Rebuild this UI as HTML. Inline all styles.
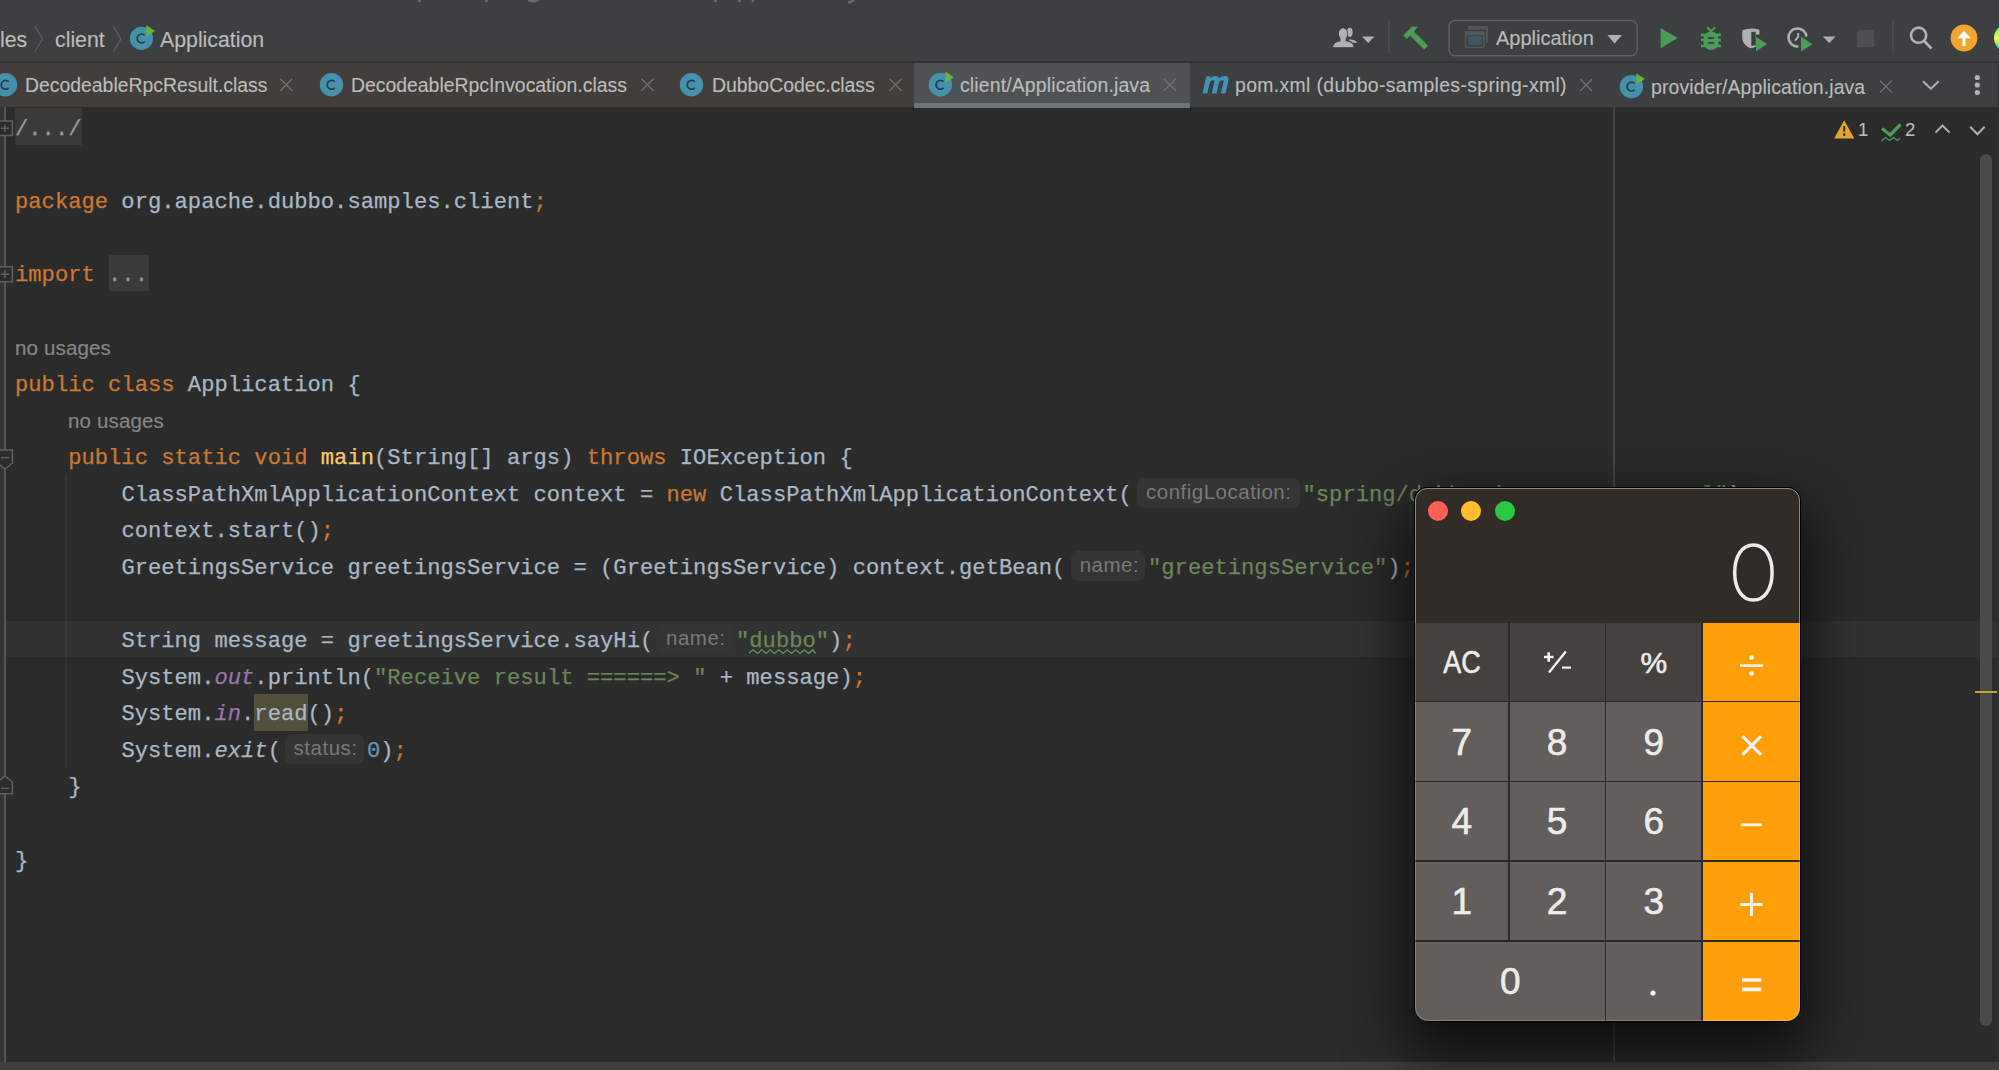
<!DOCTYPE html>
<html><head><meta charset="utf-8">
<style>
*{margin:0;padding:0;box-sizing:border-box}
html,body{width:1999px;height:1070px;overflow:hidden;background:#2b2b2b;position:relative}
body{font-family:"Liberation Sans",sans-serif}
.a{position:absolute}
.cl{position:absolute;-webkit-text-stroke:0.25px currentColor;font-family:"Liberation Mono",monospace;font-size:22.17px;line-height:36.6px;white-space:pre;height:36.6px}
.inl{position:absolute;height:30px;background:#343434;border-radius:7px}
.inl span{position:absolute;top:2px;font-size:20.5px;line-height:24px;letter-spacing:0.5px;color:#7a7a7a;white-space:pre}
.ui{position:absolute;white-space:pre;color:#bbbbbb;-webkit-text-stroke:0.15px currentColor}
</style></head><body>

<div class="a" style="left:0;top:0;width:1999px;height:62px;background:#3d3f41"></div>
<div class="a" style="left:0;top:61px;width:1999px;height:2px;background:#323334"></div>
<div class="ui" style="left:0;top:27px;font-size:21.3px;line-height:26px">les</div>
<div class="ui" style="left:55px;top:27px;font-size:21.3px;line-height:26px">client</div>
<div class="ui" style="left:160px;top:27px;font-size:21.3px;line-height:26px">Application</div>
<div class="a" style="left:0;top:63px;width:1999px;height:44px;background:#3d3f41"></div>
<div class="a" style="left:0;top:63px;width:914px;height:44px;background:#413e3c"></div>
<div class="a" style="left:914px;top:63px;width:276px;height:44px;background:#4e5254"></div>
<div class="a" style="left:914px;top:102.6px;width:276px;height:5px;background:#6f737a"></div>
<div class="ui" style="left:25px;top:73px;font-size:19.4px;line-height:24px;letter-spacing:0px">DecodeableRpcResult.class</div>
<div class="ui" style="left:351px;top:73px;font-size:19.4px;line-height:24px;letter-spacing:0px">DecodeableRpcInvocation.class</div>
<div class="ui" style="left:712px;top:73px;font-size:19.4px;line-height:24px;letter-spacing:0px">DubboCodec.class</div>
<div class="ui" style="left:960px;top:73px;font-size:19.4px;line-height:24px;letter-spacing:0.16px">client/Application.java</div>
<div class="ui" style="left:1235px;top:73px;font-size:19.4px;line-height:24px;letter-spacing:0.35px">pom.xml (dubbo-samples-spring-xml)</div>
<div class="ui" style="left:1651px;top:74.8px;font-size:19.4px;line-height:24px;letter-spacing:0.12px">provider/Application.java</div>
<div class="ui" style="left:1496px;top:26px;font-size:20px;line-height:24px">Application</div>
<div class="ui" style="left:1858px;top:118px;font-size:18.5px;line-height:24px">1</div>
<div class="ui" style="left:1905px;top:118px;font-size:18.5px;line-height:24px">2</div>
<div class="a" style="left:0;top:107px;width:4px;height:955px;background:#313335"></div>
<div class="a" style="left:4px;top:107px;width:2px;height:955px;background:#555555"></div>
<div class="a" style="left:1612.5px;top:107px;width:2px;height:955px;background:#444444"></div>
<div class="a" style="left:6px;top:620.8px;width:1993px;height:36.6px;background:#323232"></div>
<div class="a" style="left:15px;top:108.4px;width:67px;height:36.6px;background:#3a3a3a"></div>
<div class="cl" style="left:15.00px;top:111.60px"><span style="color:#9a9a9a;">/.../</span></div>
<div class="cl" style="left:15.00px;top:184.80px"><span style="color:#cc7832;">package</span><span style="color:#a9b7c6;"> org.apache.dubbo.samples.client</span><span style="color:#cc7832;">;</span></div>
<div class="a" style="left:109.1px;top:254.8px;width:40px;height:36.6px;background:#3a3a3a"></div>
<div class="cl" style="left:15.00px;top:258.00px"><span style="color:#cc7832;">import</span><span style="color:#a9b7c6;"> </span><span style="color:#9a9a9a;">...</span></div>
<div class="ui" style="left:15px;top:335.5px;font-size:20.5px;line-height:24px;color:#878787;letter-spacing:0.15px">no usages</div>
<div class="cl" style="left:15.00px;top:367.80px"><span style="color:#cc7832;">public class</span><span style="color:#a9b7c6;"> Application {</span></div>
<div class="ui" style="left:68px;top:408.7px;font-size:20.5px;line-height:24px;color:#878787;letter-spacing:0.15px">no usages</div>
<div class="cl" style="left:68.20px;top:441.00px"><span style="color:#cc7832;">public static void</span><span style="color:#a9b7c6;"> </span><span style="color:#ffc66d;">main</span><span style="color:#a9b7c6;">(String[] args) </span><span style="color:#cc7832;">throws</span><span style="color:#a9b7c6;"> IOException {</span></div>
<div class="cl" style="left:121.40px;top:477.60px"><span style="color:#a9b7c6;">ClassPathXmlApplicationContext context = </span><span style="color:#cc7832;">new</span><span style="color:#a9b7c6;"> ClassPathXmlApplicationContext(</span></div>
<div class="inl" style="left:1137.0px;top:477.7px;width:163.0px"><span style="left:9px">configLocation:</span></div>
<div class="cl" style="left:1302.50px;top:477.60px"><span style="color:#6a8759;">"spring/dubbo-demo-consumer.xml"</span><span style="color:#a9b7c6;">)</span><span style="color:#cc7832;">;</span></div>
<div class="cl" style="left:121.40px;top:514.20px"><span style="color:#a9b7c6;">context.start()</span><span style="color:#cc7832;">;</span></div>
<div class="cl" style="left:121.40px;top:550.80px"><span style="color:#a9b7c6;">GreetingsService greetingsService = (GreetingsService) context.getBean(</span></div>
<div class="inl" style="left:1070.7px;top:550.9px;width:74.3px"><span style="left:9px">name:</span></div>
<div class="cl" style="left:1148.00px;top:550.80px"><span style="color:#6a8759;">"greetingsService"</span><span style="color:#a9b7c6;">)</span><span style="color:#cc7832;">;</span></div>
<div class="cl" style="left:121.40px;top:624.00px"><span style="color:#a9b7c6;">String message = greetingsService.sayHi(</span></div>
<div class="inl" style="left:657.0px;top:624.1px;width:75.0px"><span style="left:9px">name:</span></div>
<div class="cl" style="left:736.00px;top:624.00px"><span style="color:#6a8759;">"dubbo"</span><span style="color:#a9b7c6;">)</span><span style="color:#cc7832;">;</span></div>
<div class="cl" style="left:121.40px;top:660.60px"><span style="color:#a9b7c6;">System.</span><span style="color:#9876aa;font-style:italic">out</span><span style="color:#a9b7c6;">.println(</span><span style="color:#6a8759;">"Receive result ======&gt; "</span><span style="color:#a9b7c6;"> + message)</span><span style="color:#cc7832;">;</span></div>
<div class="a" style="left:254.4px;top:694.0px;width:53.2px;height:36.6px;background:#52503a"></div>
<div class="cl" style="left:121.40px;top:697.20px"><span style="color:#a9b7c6;">System.</span><span style="color:#9876aa;font-style:italic">in</span><span style="color:#a9b7c6;">.read()</span><span style="color:#cc7832;">;</span></div>
<div class="cl" style="left:121.40px;top:733.80px"><span style="color:#a9b7c6;">System.</span><span style="color:#a9b7c6;font-style:italic">exit</span><span style="color:#a9b7c6;">(</span></div>
<div class="inl" style="left:284.6px;top:733.9px;width:79.7px"><span style="left:9px">status:</span></div>
<div class="cl" style="left:367.00px;top:733.80px"><span style="color:#6897bb;">0</span><span style="color:#a9b7c6;">)</span><span style="color:#cc7832;">;</span></div>
<div class="cl" style="left:68.20px;top:770.40px"><span style="color:#a9b7c6;">}</span></div>
<div class="cl" style="left:15.00px;top:843.60px"><span style="color:#a9b7c6;">}</span></div>
<div class="a" style="left:1997.3px;top:63px;width:1.7px;height:44px;background:#36383a"></div>
<div class="a" style="left:1997.3px;top:107px;width:1.7px;height:955px;background:#2e2e2e"></div>
<div class="a" style="left:1980px;top:154px;width:12px;height:872px;background:#4a4a4a;border-radius:6px"></div>
<div class="a" style="left:0;top:1062px;width:1999px;height:8px;background:#3c3f41"></div>
<svg class="a" style="left:0;top:0" width="1999" height="1070"><path d="M35 26.3L42.5 39L35 51.5M113.4 26.3L120.9 39L113.4 51.5" fill="none" stroke="#5d6062" stroke-width="1.3"/><circle cx="141.5" cy="38.4" r="11.6" fill="#4690ab"/><path d="M144.7 35.3A4.4 4.4 0 1 0 144.7 41.5" fill="none" stroke="#243e4a" stroke-width="1.7"/><path d="M146.2 25.1L155.0 30.9L146.6 36.4Z" fill="#62b543"/><circle cx="5.5" cy="84.8" r="11.7" fill="#4690ab"/><path d="M8.7 81.7A4.4 4.4 0 1 0 8.7 87.9" fill="none" stroke="#243e4a" stroke-width="1.7"/><circle cx="331.5" cy="84.8" r="11.7" fill="#4690ab"/><path d="M334.7 81.7A4.4 4.4 0 1 0 334.7 87.9" fill="none" stroke="#243e4a" stroke-width="1.7"/><circle cx="691.5" cy="84.8" r="11.7" fill="#4690ab"/><path d="M694.7 81.7A4.4 4.4 0 1 0 694.7 87.9" fill="none" stroke="#243e4a" stroke-width="1.7"/><circle cx="940.4" cy="84.8" r="11.7" fill="#4690ab"/><path d="M943.6 81.7A4.4 4.4 0 1 0 943.6 87.9" fill="none" stroke="#243e4a" stroke-width="1.7"/><path d="M945.1 71.5L953.9 77.3L945.5 82.8Z" fill="#62b543"/><circle cx="1631.4" cy="86.6" r="11.7" fill="#4690ab"/><path d="M1634.6 83.5A4.4 4.4 0 1 0 1634.6 89.7" fill="none" stroke="#243e4a" stroke-width="1.7"/><path d="M1636.1 73.3L1644.9 79.1L1636.5 84.6Z" fill="#62b543"/><g transform="translate(1206.5 76) skewX(-13)"><path d="M0 17.4V0.3H4.4V2.2C5.6 0.8 7 0 9 0C11 0 12.4 0.8 13.3 2.3C14.6 0.8 16.2 0 18.2 0C21.5 0 23 2 23 5.5V17.4H18.4V6.6C18.4 5 17.8 4.3 16.6 4.3C15.2 4.3 14 5.3 14 7.2V17.4H9.2V6.6C9.2 5 8.6 4.3 7.4 4.3C6 4.3 4.8 5.3 4.8 7.2V17.4Z" fill="#3d95b8"/></g><path d="M280.3 78.8L292.3 90.8M292.3 78.8L280.3 90.8" stroke="#6c7175" stroke-width="1.4"/><path d="M641.4 78.8L653.4 90.8M653.4 78.8L641.4 90.8" stroke="#6c7175" stroke-width="1.4"/><path d="M889.5 78.8L901.5 90.8M901.5 78.8L889.5 90.8" stroke="#6c7175" stroke-width="1.4"/><path d="M1163.9 78.8L1175.9 90.8M1175.9 78.8L1163.9 90.8" stroke="#6c7175" stroke-width="1.4"/><path d="M1580.1 79.0L1592.1 91.0M1592.1 79.0L1580.1 91.0" stroke="#6c7175" stroke-width="1.4"/><path d="M1879.9 80.6L1891.9 92.6M1891.9 80.6L1879.9 92.6" stroke="#6c7175" stroke-width="1.4"/><path d="M1923 81.2L1930.9 88.8L1938.7 81.2" fill="none" stroke="#afb1b3" stroke-width="2"/><circle cx="1977.3" cy="77.5" r="2.6" fill="#afb1b3"/><circle cx="1977.3" cy="85" r="2.6" fill="#afb1b3"/><circle cx="1977.3" cy="92.5" r="2.6" fill="#afb1b3"/><ellipse cx="1349.8" cy="32.3" rx="2.9" ry="4.6" fill="#afb1b3"/><path d="M1349 39.3C1353.5 39.8 1357 41 1357 42.8H1350Z" fill="#afb1b3"/><ellipse cx="1343.1" cy="33.6" rx="4.3" ry="5.5" fill="#afb1b3" stroke="#3c3f41" stroke-width="1.1"/><path d="M1332.6 47.8C1332.6 42.6 1337 40.4 1343.2 40.4C1349.5 40.4 1354.2 42.6 1354.2 47.8Z" fill="#afb1b3" stroke="#3c3f41" stroke-width="1.1"/><ellipse cx="1343.1" cy="33.6" rx="4.2" ry="5.4" fill="#afb1b3"/><rect x="1340.5" y="37" width="5.2" height="4.5" fill="#afb1b3"/><path d="M1362 36.5H1374.4L1368.2 42.9Z" fill="#afb1b3"/><path d="M1389 21.8V54M1893.1 21.3V54.5" stroke="#505355" stroke-width="1.2"/><path d="M1417.9 26.5L1412 26.4L1403.2 35.4L1406.8 38.8L1410.4 35.4L1415.3 40.9L1424.4 49.4L1427.9 45.8L1419.9 37.3L1414 31.9Z" fill="#4a9c56"/><rect x="1449" y="20.6" width="188.2" height="35.2" rx="6" fill="none" stroke="#5e6163" stroke-width="1.5"/><path d="M1468.1 26H1487.9V42.9H1486.1V29.8H1468.1Z" fill="#52575b"/><path d="M1464.8 31.1H1484.6V48.1H1464.8Z" fill="#52575b"/><rect x="1466.4" y="35.2" width="16.6" height="11.3" fill="#3d3f41"/><rect x="1467.9" y="36.2" width="13.9" height="8.8" fill="#3f5866"/><path d="M1607.4 35H1621.9L1614.6 43.6Z" fill="#afb1b3"/><path d="M1660.6 27.9L1677.7 38L1660.6 48.2Z" fill="#4a9c56"/><path d="M1707.1 27.4L1711 31L1715.2 27.4" fill="none" stroke="#4a9c56" stroke-width="2.2"/><rect x="1703.5" y="31.5" width="15.1" height="18.5" rx="7.5" fill="#4a9c56"/><rect x="1701" y="33.6" width="20" height="2.6" fill="#4a9c56"/><rect x="1701" y="38.8" width="20" height="2.6" fill="#4a9c56"/><rect x="1701" y="44.6" width="20" height="2.6" fill="#4a9c56"/><rect x="1708" y="37.2" width="6.1" height="1.8" fill="#3c3f41"/><rect x="1708" y="42" width="6.1" height="1.8" fill="#3c3f41"/><path d="M1742.3 30.2Q1750.5 27.2 1759.4 29.7V34.6H1755.7V46.5Q1753 48.2 1750.8 48.2Q1743 45.5 1742.3 38.5Z" fill="#afb1b3"/><path d="M1751.3 31.8H1755.7V45Q1753.5 45 1751.3 46.5Z" fill="#3c3f41"/><path d="M1756 36.7L1767 44.1L1756 51.5Z" fill="#4a9c56"/><path d="M1806.47 36.7A9 9 0 1 0 1798.4 46.45" fill="none" stroke="#afb1b3" stroke-width="2.5"/><path d="M1798.2 33V36.8L1795 40.6" fill="none" stroke="#afb1b3" stroke-width="2"/><path d="M1801 36.5L1812.6 44.2L1801 51.5Z" fill="#4a9c56"/><path d="M1822.9 36.6H1835.5L1829.2 42.9Z" fill="#afb1b3"/><rect x="1857.2" y="29.9" width="17.1" height="17.1" fill="#4d4f51"/><circle cx="1918.6" cy="35.2" r="7.6" fill="none" stroke="#afb1b3" stroke-width="2.6"/><path d="M1924 40.8L1931.5 48.6" stroke="#afb1b3" stroke-width="2.8"/><circle cx="1964" cy="38" r="13.4" fill="#f0a732"/><path d="M1957.2 38.2L1964 30.8L1970.8 38.2Z" fill="#ffffff"/><rect x="1962.5" y="36.5" width="3" height="9.5" fill="#ffffff"/><defs><linearGradient id="rb" x1="0" y1="0" x2="0" y2="1"><stop offset="0" stop-color="#21d789"/><stop offset="0.5" stop-color="#fcf84a"/><stop offset="1" stop-color="#07c3f2"/></linearGradient></defs><circle cx="2008" cy="38" r="14" fill="url(#rb)"/><path d="M1844.2 120.2L1854.3 138.6H1834.1Z" fill="#e0a52a"/><path d="M1844.2 126V131.5M1844.2 133.3V136" stroke="#2b2b2b" stroke-width="2"/><path d="M1882 128.5L1890.3 135L1900.5 124.3" fill="none" stroke="#4a9c56" stroke-width="3.3"/><path d="M1881.5 141L1885.5 137.5L1889.5 140.5L1893.5 137.5L1897.5 140.5L1900 138.2" fill="none" stroke="#4a9c56" stroke-width="1.3"/><path d="M1935.5 132.6L1942.5 125.5L1949.5 132.6M1970.2 126.8L1977.4 134.2L1984.6 126.8" fill="none" stroke="#afb1b3" stroke-width="2"/><path d="M-2.6 450.1H12.4V463L4.9 469L-2.6 463Z" fill="#2b2b2b" stroke="#606060" stroke-width="1.5"/><path d="M1 457.6H9" stroke="#606060" stroke-width="1.5"/><path d="M-2.6 793.8H12.4V782L4.9 776L-2.6 782Z" fill="#2b2b2b" stroke="#606060" stroke-width="1.5"/><path d="M1 788.4H9" stroke="#606060" stroke-width="1.5"/><rect x="-2.6" y="121" width="15" height="14.5" fill="#2b2b2b" stroke="#606060" stroke-width="1.5"/><path d="M1 128.2H9M4.9 124.2V132.2" stroke="#606060" stroke-width="1.5"/><rect x="-2.6" y="266.8" width="15" height="15.0" fill="#2b2b2b" stroke="#606060" stroke-width="1.5"/><path d="M1 274.3H9M4.9 270.3V278.3" stroke="#606060" stroke-width="1.5"/><path d="M66 474.4V767" stroke="#393939" stroke-width="1.2"/><path d="M749 653L753.25 649.8L757.50 653.4L761.75 649.8L766.00 653.4L770.25 649.8L774.50 653.4L778.75 649.8L783.00 653.4L787.25 649.8L791.50 653.4L795.75 649.8L800.00 653.4L804.25 649.8L808.50 653.4L812.75 649.8L815.60 653.4" fill="none" stroke="#5a9e5e" stroke-width="1.3"/><rect x="418.2" y="0" width="2.6" height="2.2" fill="#6a6c6e"/><rect x="485.2" y="0" width="2.6" height="2.2" fill="#6a6c6e"/><rect x="714.2" y="0" width="2.6" height="2.2" fill="#6a6c6e"/><rect x="738.2" y="0" width="2.6" height="2.2" fill="#6a6c6e"/><rect x="751.7" y="0" width="2.6" height="2.2" fill="#6a6c6e"/><ellipse cx="533.5" cy="0" rx="5.5" ry="2.6" fill="#6a6c6e"/><path d="M848 2.5C851 2.2 853 1.2 854 -1" stroke="#6a6c6e" stroke-width="2.4" fill="none"/><path d="M1975 692H1997" stroke="#c9a227" stroke-width="2"/></svg>
<div class="a" style="left:1414px;top:487px;width:387px;height:535px;border-radius:13px 13px 15px 15px;background:#000;box-shadow:0 26px 60px 8px rgba(0,0,0,0.72)"></div>
<div class="a" style="left:1415px;top:488px;width:385px;height:533px;border-radius:12px;background:#322c29;overflow:hidden;border:1px solid #6a6562">
<div class="a" style="left:12.0px;top:12.0px;width:20px;height:20px;border-radius:10px;background:#fe5f57"></div>
<div class="a" style="left:45.2px;top:12.0px;width:20px;height:20px;border-radius:10px;background:#febc2e"></div>
<div class="a" style="left:78.6px;top:12.0px;width:20px;height:20px;border-radius:10px;background:#28c840"></div>
</div>
<div class="a" style="left:1415px;top:622.5px;width:385px;height:398.5px;overflow:hidden;border-radius:0 0 14px 14px;background:#2e2926">
<div class="a" style="left:0.00px;top:0.00px;width:92.85px;height:78.15px;background:#46413e"></div>
<div class="a" style="left:94.55px;top:0.00px;width:95.10px;height:78.15px;background:#46413e"></div>
<div class="a" style="left:191.35px;top:0.00px;width:94.80px;height:78.15px;background:#46413e"></div>
<div class="a" style="left:0.00px;top:79.85px;width:92.85px;height:78.20px;background:#635e5b"></div>
<div class="a" style="left:94.55px;top:79.85px;width:95.10px;height:78.20px;background:#635e5b"></div>
<div class="a" style="left:191.35px;top:79.85px;width:94.80px;height:78.20px;background:#635e5b"></div>
<div class="a" style="left:0.00px;top:159.75px;width:92.85px;height:78.10px;background:#635e5b"></div>
<div class="a" style="left:94.55px;top:159.75px;width:95.10px;height:78.10px;background:#635e5b"></div>
<div class="a" style="left:191.35px;top:159.75px;width:94.80px;height:78.10px;background:#635e5b"></div>
<div class="a" style="left:0.00px;top:239.55px;width:92.85px;height:78.10px;background:#635e5b"></div>
<div class="a" style="left:94.55px;top:239.55px;width:95.10px;height:78.10px;background:#635e5b"></div>
<div class="a" style="left:191.35px;top:239.55px;width:94.80px;height:78.10px;background:#635e5b"></div>
<div class="a" style="left:0.00px;top:319.35px;width:189.65px;height:79.15px;background:#635e5b"></div>
<div class="a" style="left:191.35px;top:319.35px;width:94.80px;height:79.15px;background:#635e5b"></div>
<div class="a" style="left:287.85px;top:0.00px;width:97.15px;height:78.15px;background:#fe9f0a"></div>
<div class="a" style="left:287.85px;top:79.85px;width:97.15px;height:78.20px;background:#fe9f0a"></div>
<div class="a" style="left:287.85px;top:159.75px;width:97.15px;height:78.10px;background:#fe9f0a"></div>
<div class="a" style="left:287.85px;top:239.55px;width:97.15px;height:78.10px;background:#fe9f0a"></div>
<div class="a" style="left:287.85px;top:319.35px;width:97.15px;height:79.15px;background:#fe9f0a"></div>
</div>
<div class="a" style="left:1411.8px;top:631.5px;width:100px;height:62.0px;line-height:62.0px;text-align:center;font-size:31px;color:#ececec;-webkit-text-stroke:0.6px #ececec;transform:scaleX(0.87)">AC</div>
<div class="a" style="left:1603.8px;top:633.0px;width:100px;height:60.0px;line-height:60.0px;text-align:center;font-size:30px;color:#ececec;-webkit-text-stroke:0.6px #ececec;">%</div>
<div class="a" style="left:1411.8px;top:705.5px;width:100px;height:74.0px;line-height:74.0px;text-align:center;font-size:37px;color:#ececec;-webkit-text-stroke:0.6px #ececec;">7</div>
<div class="a" style="left:1507.1px;top:705.5px;width:100px;height:74.0px;line-height:74.0px;text-align:center;font-size:37px;color:#ececec;-webkit-text-stroke:0.6px #ececec;">8</div>
<div class="a" style="left:1603.8px;top:705.5px;width:100px;height:74.0px;line-height:74.0px;text-align:center;font-size:37px;color:#ececec;-webkit-text-stroke:0.6px #ececec;">9</div>
<div class="a" style="left:1411.8px;top:785.3px;width:100px;height:74.0px;line-height:74.0px;text-align:center;font-size:37px;color:#ececec;-webkit-text-stroke:0.6px #ececec;">4</div>
<div class="a" style="left:1507.1px;top:785.3px;width:100px;height:74.0px;line-height:74.0px;text-align:center;font-size:37px;color:#ececec;-webkit-text-stroke:0.6px #ececec;">5</div>
<div class="a" style="left:1603.8px;top:785.3px;width:100px;height:74.0px;line-height:74.0px;text-align:center;font-size:37px;color:#ececec;-webkit-text-stroke:0.6px #ececec;">6</div>
<div class="a" style="left:1411.8px;top:865.1px;width:100px;height:74.0px;line-height:74.0px;text-align:center;font-size:37px;color:#ececec;-webkit-text-stroke:0.6px #ececec;">1</div>
<div class="a" style="left:1507.1px;top:865.1px;width:100px;height:74.0px;line-height:74.0px;text-align:center;font-size:37px;color:#ececec;-webkit-text-stroke:0.6px #ececec;">2</div>
<div class="a" style="left:1603.8px;top:865.1px;width:100px;height:74.0px;line-height:74.0px;text-align:center;font-size:37px;color:#ececec;-webkit-text-stroke:0.6px #ececec;">3</div>
<div class="a" style="left:1460.2px;top:945.0px;width:100px;height:74.0px;line-height:74.0px;text-align:center;font-size:37px;color:#ececec;-webkit-text-stroke:0.6px #ececec;">0</div>
<svg class="a" style="left:0;top:0" width="1999" height="1070"><path d="M1753.4 544.9000000000001C1764.62 544.9000000000001 1772.1000000000001 555.92 1772.1000000000001 572.45C1772.1000000000001 588.98 1764.62 600.0 1753.4 600.0C1742.18 600.0 1734.7 588.98 1734.7 572.45C1734.7 555.92 1742.18 544.9000000000001 1753.4 544.9000000000001Z" fill="none" stroke="#ececec" stroke-width="3.5"/><path d="M1544 657h9.5M1548.7 652.3v9.5" stroke="#f2f2f2" stroke-width="2.6"/><path d="M1549 672.5L1565.8 651.5" stroke="#f2f2f2" stroke-width="2.4"/><path d="M1562 667.6h9" stroke="#f2f2f2" stroke-width="2.2"/><path d="M1740 665.6h23" stroke="#f2f2f2" stroke-width="2.6"/><circle cx="1751.6" cy="657.7" r="2.4" fill="#f2f2f2"/><circle cx="1751.6" cy="673.6" r="2.4" fill="#f2f2f2"/><path d="M1742.5 736.2L1761 754.8M1761 736.2L1742.5 754.8" stroke="#f2f2f2" stroke-width="3.2"/><path d="M1741 824.8h21" stroke="#f2f2f2" stroke-width="2.8"/><path d="M1740.3 904.5h22.2M1751.4 893v23" stroke="#f2f2f2" stroke-width="3"/><path d="M1742 980h19.3M1742 989.4h19.3" stroke="#f2f2f2" stroke-width="3.6"/><circle cx="1653" cy="993" r="2.6" fill="#f2f2f2"/></svg>
<div class="a" style="left:1415px;top:488px;width:385px;height:533px;border-radius:12.5px 12.5px 14px 14px;border:1px solid rgba(255,255,255,0.22)"></div>
</body></html>
